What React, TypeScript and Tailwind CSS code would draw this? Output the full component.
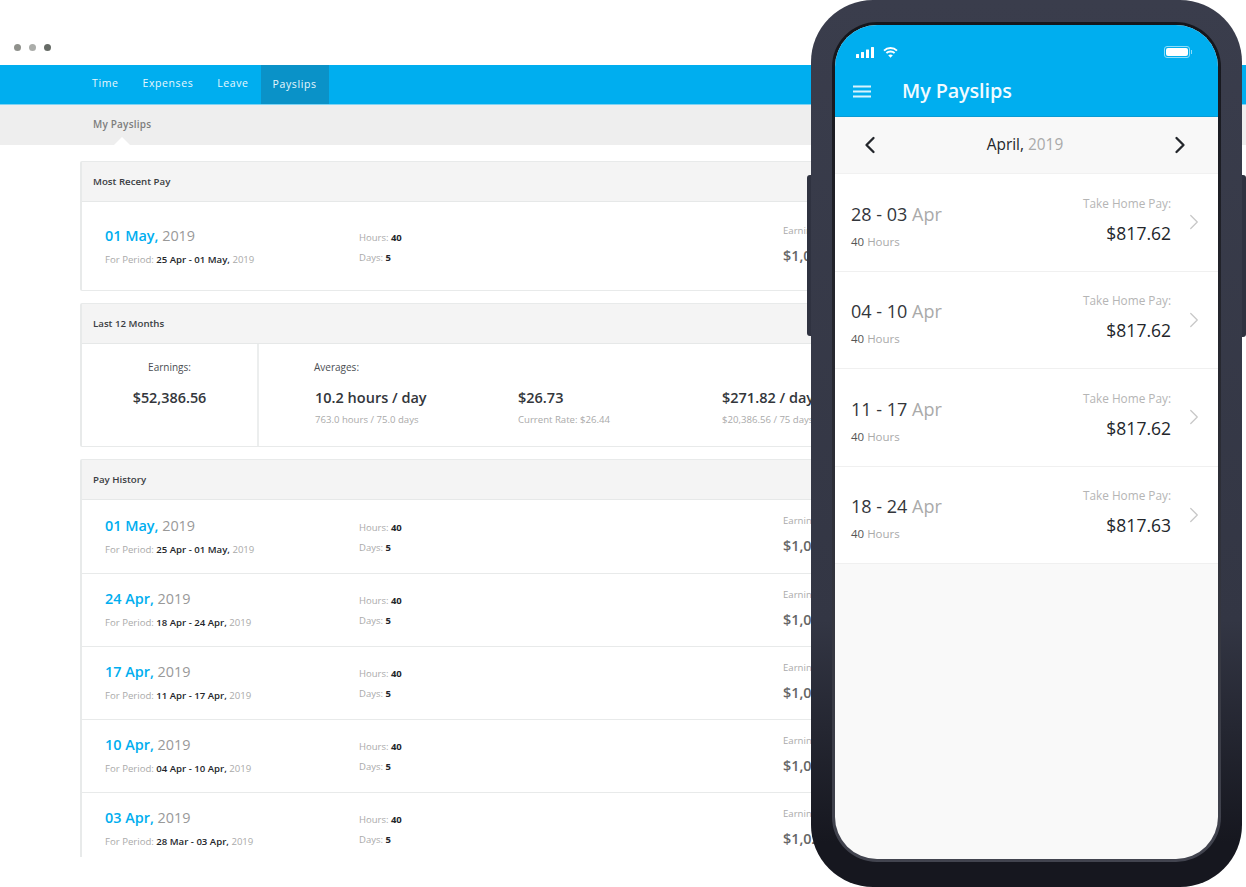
import React from 'react'
import { ChevronLeft, ChevronRight } from 'lucide-react'

const font = { fontFamily: '"Open Sans", sans-serif' }

const history = [
  { date: '01 May,', period: '25 Apr - 01 May,' },
  { date: '24 Apr,', period: '18 Apr - 24 Apr,' },
  { date: '17 Apr,', period: '11 Apr - 17 Apr,' },
  { date: '10 Apr,', period: '04 Apr - 10 Apr,' },
  { date: '03 Apr,', period: '28 Mar - 03 Apr,' },
]

const payslips = [
  { range: '28 - 03', pay: '$817.62' },
  { range: '04 - 10', pay: '$817.62' },
  { range: '11 - 17', pay: '$817.62' },
  { range: '18 - 24', pay: '$817.63' },
]

function CardHeader({ title }: { title: string }) {
  return (
    <div className="h-10 flex items-center pl-[11px] pt-px bg-[#f4f4f4] border-b border-[#e6e8e8] text-[9.7px] font-semibold text-[#3a3d42]">
      {title}
    </div>
  )
}

function PayRow({ date, period, height, compact }: { date: string; period: string; height: string; compact?: boolean }) {
  return (
    <div className={`flex items-center pl-[23px] ${height}`}>
      <div className={`w-[254px] shrink-0 ${compact ? '-mt-[1px]' : ''}`}>
        <div className="text-[14.4px] leading-5 text-[#999]">
          <span className="font-semibold text-[#00aeef]">{date}</span> 2019
        </div>
        <div className="mt-[7px] text-[9.6px] leading-[14px] text-[#aaa]">
          For Period: <span className="font-semibold text-[#23262b]">{period}</span> 2019
        </div>
      </div>
      <div className="w-[424px] shrink-0 mt-[2px] text-[9.5px] text-[#aaa] leading-[14px] space-y-[6px]">
        <div>Hours: <span className="font-bold text-[#23262b]">40</span></div>
        <div>Days: <span className="font-bold text-[#23262b]">5</span></div>
      </div>
      <div className="-mt-[3px]">
        <div className="text-[9.6px] leading-[14px] text-[#aaa]">Earnings:</div>
        <div className="mt-[8px] text-[14.4px] leading-5 font-semibold text-[#666]">$1,020.00</div>
      </div>
    </div>
  )
}

function Average({ main, sub, width }: { main: string; sub: string; width: string }) {
  return (
    <div className={`shrink-0 ${width}`}>
      <div className="text-[14.5px] leading-5 font-semibold text-[#33363b]">{main}</div>
      <div className="mt-[5px] text-[9.6px] leading-[14px] text-[#aaa] whitespace-nowrap">{sub}</div>
    </div>
  )
}

function Desktop() {
  return (
    <div className="h-[857px] overflow-hidden">
      <div className="h-[65px] flex items-center gap-[8px] pl-[14px] pt-[29px]">
        <span className="size-[7px] rounded-full bg-[#8f918c]" />
        <span className="size-[7px] rounded-full bg-[#abadaa]" />
        <span className="size-[7px] rounded-full bg-[#666b66]" />
      </div>
      <div className="h-10 bg-[#00aeef] border-b border-[#7fd3f3] flex pl-20 pb-px text-[10.5px] tracking-[0.6px] text-[#e8f8fe]">
        <div className="px-3 flex items-center">Time</div>
        <div className="px-3 flex items-center">Expenses</div>
        <div className="px-3 flex items-center">Leave</div>
        <div className="px-3 flex items-center -mb-px bg-[#0a92c8] w-[68px]">Payslips</div>
      </div>
      <div className="relative h-10 bg-[#eeeeee] pl-[93px] pb-[2px] flex items-center text-[10px] font-semibold tracking-[0.2px] text-[#7d7d7d]">
        My Payslips
        <span className="absolute left-[114px] bottom-0 size-0 border-x-[8px] border-b-[8px] border-x-transparent border-b-white" />
      </div>
      <div className="ml-[80px] w-[900px] pt-4">
        <div className="h-[130px] border-y border-x-2 border-[#e8eaea] rounded-[2px]">
          <CardHeader title="Most Recent Pay" />
          <PayRow date="01 May," period="25 Apr - 01 May," height="h-[89px]" />
        </div>
        <div className="mt-[12px] h-[144px] border-y border-x-2 border-[#e8eaea] rounded-[2px]">
          <CardHeader title="Last 12 Months" />
          <div className="flex h-[102px]">
            <div className="w-[177px] shrink-0 border-r-2 border-[#eceeee] pt-[16px] text-center">
              <div className="text-[10px] leading-[14px] text-[#4a4d52]">Earnings:</div>
              <div className="mt-[14px] text-[14.4px] leading-5 font-semibold text-[#33363b]">$52,386.56</div>
            </div>
            <div className="pl-[55px] pt-[16px]">
              <div className="text-[10px] leading-[14px] text-[#4a4d52]">Averages:</div>
              <div className="mt-[14px] flex pl-px">
                <Average main="10.2 hours / day" sub="763.0 hours / 75.0 days" width="w-[203px]" />
                <Average main="$26.73" sub="Current Rate: $26.44" width="w-[204px]" />
                <Average main="$271.82 / day" sub="$20,386.56 / 75 days" width="w-[140px]" />
              </div>
            </div>
          </div>
        </div>
        <div className="mt-[12px] border-x-2 border-t border-[#e8eaea] rounded-t-[2px]">
          <CardHeader title="Pay History" />
          {history.map((row, i) => (
            <div key={row.date} className={i > 0 ? 'border-t border-[#e8eaea]' : ''}>
              <PayRow date={row.date} period={row.period} height={i > 0 ? 'h-[72px]' : 'h-[73px]'} compact />
            </div>
          ))}
        </div>
      </div>
    </div>
  )
}

function StatusBar() {
  return (
    <div className="h-[33px] flex items-end justify-between pl-[21px] pr-[26px] text-white">
      <div className="flex items-end gap-[9px]">
        <svg width="18" height="11" viewBox="0 0 18 11" fill="currentColor">
          <rect x="0" y="7" width="3" height="4" rx="0.5" />
          <rect x="5" y="5" width="3" height="6" rx="0.5" />
          <rect x="10" y="2.5" width="3" height="8.5" rx="0.5" />
          <rect x="15" y="0" width="3" height="11" rx="0.5" />
        </svg>
        <svg width="15" height="11" viewBox="0 0 15 11" fill="none" stroke="currentColor" strokeWidth="1.9" className="mb-[0.5px]">
          <path d="M1 3.6C4.6 0.2 10.4 0.2 14 3.6" />
          <path d="M3.4 6C5.6 4 9.4 4 11.6 6" />
          <path d="M7.5 10.8 5.2 8.3C6.6 7.3 8.4 7.3 9.8 8.3Z" fill="currentColor" stroke="none" />
        </svg>
      </div>
      <div className="flex items-center gap-px">
        <div className="w-[26px] h-[12px] rounded-[3px] border border-[#8fdcf8] p-px">
          <div className="h-full rounded-[2px] bg-white" />
        </div>
        <div className="w-px h-1 bg-[#8fdcf8]" />
      </div>
    </div>
  )
}

function Phone() {
  return (
    <div className="absolute left-[807px] top-0 w-[439px] h-[887px]">
      <div className="absolute left-0 top-[175px] w-[10px] h-[161px] rounded-l-[3px] bg-[#2f3240]" />
      <div className="absolute right-0 top-[175px] w-[10px] h-[162px] rounded-r-[3px] bg-[#2f3240]" />
      <div className="absolute left-1 right-1 inset-y-0 rounded-[62px] bg-linear-to-b from-[#3a3d4c] via-[#333644] via-70% to-[#16171f] to-95% px-[21px] pt-[22px] pb-[25px]">
        <div className="h-full rounded-[45px] bg-linear-to-b from-[#15161c] to-[#42444f] p-[3px]">
          <div className="h-full rounded-[42px] overflow-hidden bg-[#f9f9f9]" style={font}>
            <div className="h-[92px] bg-[#00aeef] border-b border-[#0a9bd4]">
              <StatusBar />
              <div className="flex items-center h-[36px] mt-[15px] text-white">
                <svg width="18" height="13" viewBox="0 0 18 13" fill="none" stroke="#d8f3fd" strokeWidth="2" className="ml-[18px]">
                  <path d="M0 1.5H18M0 6.5H18M0 11.5H18" />
                </svg>
                <span className="ml-[31px] text-[19.8px] font-semibold tracking-[-0.1px] text-[#f2fbff]">My Payslips</span>
              </div>
            </div>
            <div className="h-[57px] bg-[#f8f8f8] border-b border-[#f1f1f1] flex items-center justify-between pl-[21px] pr-[24px] text-[#23262b]">
              <ChevronLeft size={28} strokeWidth={2} />
              <div className="text-[15.4px]">
                April, <span className="text-[#aaa]">2019</span>
              </div>
              <ChevronRight size={28} strokeWidth={2} />
            </div>
            {payslips.map((slip) => (
              <div key={slip.range} className="h-[97.5px] bg-white border-b border-[#f0f0f0] flex items-center pl-4 pr-[11px]">
                <div className="flex-1 mt-[7px]">
                  <div className="text-[18px] leading-6 text-[#33363b]">
                    {slip.range} <span className="text-[#aaa]">Apr</span>
                  </div>
                  <div className="mt-[8px] text-[11.5px] leading-4 text-[#aaa]">
                    <span className="text-[#555]">40</span> Hours
                  </div>
                </div>
                <div className="text-right -mt-[5px]">
                  <div className="text-[11.8px] leading-4 text-[#b5b5b5]">Take Home Pay:</div>
                  <div className="mt-[10px] text-[17.5px] leading-6 text-[#23262b]">{slip.pay}</div>
                </div>
                <ChevronRight size={26} strokeWidth={1.2} className="ml-[10px] text-[#c8c8c8]" />
              </div>
            ))}
          </div>
        </div>
      </div>
    </div>
  )
}

export default function App() {
  return (
    <div className="relative w-[1246px] h-[887px] overflow-hidden bg-white" style={font}>
      <Desktop />
      <Phone />
    </div>
  )
}
